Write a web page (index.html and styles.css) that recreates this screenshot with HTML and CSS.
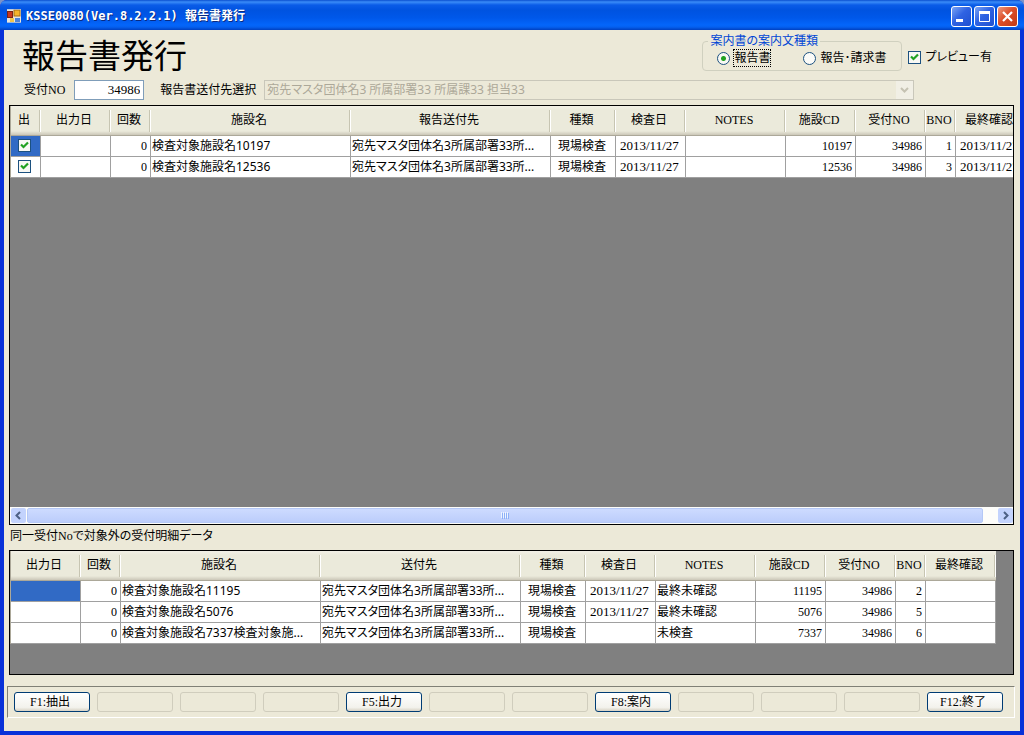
FILE: index.html
```
<!DOCTYPE html>
<html lang="ja">
<head>
<meta charset="utf-8">
<title>KSSE0080(Ver.8.2.2.1) 報告書発行</title>
<link rel="stylesheet" href="styles.css">
</head>
<body>
<div class="window">
  <header class="titlebar">
    <svg class="app-icon" viewBox="0 0 14 14" aria-hidden="true">
      <rect width="14" height="14" fill="#e8e6dc"/>
      <rect x="0.500" y="2.500" width="5" height="6" fill="#c8371c" stroke="#7b2413"/>
      <rect x="7" y="1" width="6" height="6" fill="#f5b52a" stroke="#a66d10"/>
      <rect x="3" y="9" width="4" height="4" fill="#f3c64b"/>
      <rect x="8" y="9" width="5" height="4" fill="#4e83d8"/>
      <path d="M0 0H14M0 13.500H14" stroke="#9cb4dd"/>
    </svg>
    <span class="caption">KSSE0080(Ver.8.2.2.1) 報告書発行</span>
    <div class="controls">
      <button class="ctl" type="button" aria-label="最小化"><svg viewBox="0 0 19 19"><path d="M4 13.500H11" stroke="#fff" stroke-width="3"/></svg></button>
      <button class="ctl" type="button" aria-label="最大化"><svg viewBox="0 0 19 19"><path d="M4.500 5V14.500H14.500V5" fill="none" stroke="#fff"/><path d="M4 5.500H15" stroke="#fff" stroke-width="3"/></svg></button>
      <button class="ctl close" type="button" aria-label="閉じる"><svg viewBox="0 0 19 19"><path d="M5 5L14 14M14 5L5 14" stroke="#fff" stroke-width="2.200"/></svg></button>
    </div>
  </header>
  <main class="client">
    <section class="top">
      <h1>報告書発行</h1>
      <div class="options">
        <fieldset class="group">
          <legend>案内書の案内文種類</legend>
          <label class="opt"><input class="radio" type="radio" name="doc" checked><span class="focus">報告書</span></label>
          <label class="opt"><input class="radio" type="radio" name="doc"><span>報告･請求書</span></label>
        </fieldset>
        <label class="opt preview"><input class="check" type="checkbox" checked><span>プレビュー有</span></label>
      </div>
    </section>
    <section class="filter">
      <label class="filter-label mixed" for="no">受付NO</label>
      <input class="text" id="no" type="text" value="34986">
      <label class="filter-label" for="dest">報告書送付先選択</label>
      <div class="combo">
        <select id="dest" disabled><option>宛先マスタ団体名3 所属部署33 所属課33 担当33</option></select>
        <svg class="arrow" viewBox="0 0 17 17" aria-hidden="true"><path d="M5 6.500L8.500 10L12 6.500" fill="none" stroke="#c5c2b2" stroke-width="2"/></svg>
      </div>
    </section>

    <section class="grid main-grid">
      <div class="rows">
        <table>
          <colgroup><col class="w30"><col class="w70"><col class="w40"><col class="w200"><col class="w200"><col class="w65"><col class="w70"><col class="w100"><col class="w70"><col class="w70"><col class="w30"><col class="w70"></colgroup>
          <thead><tr><th>出</th><th>出力日</th><th>回数</th><th>施設名</th><th>報告送付先</th><th>種類</th><th>検査日</th><th>NOTES</th><th>施設CD</th><th>受付NO</th><th>BNO</th><th>最終確認</th></tr></thead>
          <tbody>
            <tr><td class="mid sel"><input class="check" type="checkbox" aria-label="出力 10197" checked></td><td></td><td class="num">0</td><td>検査対象施設名10197</td><td>宛先マスタ団体名3所属部署33所...</td><td class="mid">現場検査</td><td class="date">2013/11/27</td><td></td><td class="num">10197</td><td class="num">34986</td><td class="num">1</td><td class="date">2013/11/27</td></tr>
            <tr><td class="mid"><input class="check" type="checkbox" aria-label="出力 12536" checked></td><td></td><td class="num">0</td><td>検査対象施設名12536</td><td>宛先マスタ団体名3所属部署33所...</td><td class="mid">現場検査</td><td class="date">2013/11/27</td><td></td><td class="num">12536</td><td class="num">34986</td><td class="num">3</td><td class="date">2013/11/27</td></tr>
          </tbody>
        </table>
      </div>
      <div class="scroll">
        <button class="step" type="button" aria-label="左へ"><svg viewBox="0 0 15 15"><path d="M9 4L5.500 7.500L9 11" fill="none" stroke="#4d6185" stroke-width="2"/></svg></button>
        <div class="track"><div class="thumb"><svg class="grip" viewBox="0 0 9 7"><path d="M0.500 0V6M2.500 0V6M4.500 0V6M6.500 0V6" stroke="#eef4fe"/><path d="M1.500 1V7M3.500 1V7M5.500 1V7M7.500 1V7" stroke="#8cb0f8"/></svg></div></div>
        <button class="step" type="button" aria-label="右へ"><svg viewBox="0 0 15 15"><path d="M6 4L9.500 7.500L6 11" fill="none" stroke="#4d6185" stroke-width="2"/></svg></button>
      </div>
    </section>

    <h2 class="mixed">同一受付Noで対象外の受付明細データ</h2>

    <section class="grid sub-grid">
      <div class="rows">
        <table>
          <colgroup><col class="w70"><col class="w40"><col class="w200"><col class="w200"><col class="w65"><col class="w70"><col class="w100"><col class="w70"><col class="w70"><col class="w30"><col class="w70"></colgroup>
          <thead><tr><th>出力日</th><th>回数</th><th>施設名</th><th>送付先</th><th>種類</th><th>検査日</th><th>NOTES</th><th>施設CD</th><th>受付NO</th><th>BNO</th><th>最終確認</th></tr></thead>
          <tbody>
            <tr><td class="sel"></td><td class="num">0</td><td>検査対象施設名11195</td><td>宛先マスタ団体名3所属部署33所...</td><td class="mid">現場検査</td><td class="date">2013/11/27</td><td>最終未確認</td><td class="num">11195</td><td class="num">34986</td><td class="num">2</td><td></td></tr>
            <tr><td></td><td class="num">0</td><td>検査対象施設名5076</td><td>宛先マスタ団体名3所属部署33所...</td><td class="mid">現場検査</td><td class="date">2013/11/27</td><td>最終未確認</td><td class="num">5076</td><td class="num">34986</td><td class="num">5</td><td></td></tr>
            <tr><td></td><td class="num">0</td><td>検査対象施設名7337検査対象施...</td><td>宛先マスタ団体名3所属部署33所...</td><td class="mid">現場検査</td><td></td><td>未検査</td><td class="num">7337</td><td class="num">34986</td><td class="num">6</td><td></td></tr>
          </tbody>
        </table>
      </div>
    </section>

    <footer class="keys">
      <button class="key" type="button">F1:抽出</button>
      <button class="key" type="button" disabled></button>
      <button class="key" type="button" disabled></button>
      <button class="key" type="button" disabled></button>
      <button class="key" type="button">F5:出力</button>
      <button class="key" type="button" disabled></button>
      <button class="key" type="button" disabled></button>
      <button class="key" type="button">F8:案内</button>
      <button class="key" type="button" disabled></button>
      <button class="key" type="button" disabled></button>
      <button class="key" type="button" disabled></button>
      <button class="key" type="button">F12:終了</button>
    </footer>
  </main>
</div>
</body>
</html>
```
FILE: styles.css
```
* { box-sizing: border-box; }
body {
  margin: 0;
  background: #7b93c8;
  color: #000;
  font: 12px/16px "Noto Sans", "Noto Sans CJK JP", sans-serif;
  font-feature-settings: "palt";
}
button, input, select { font: inherit; color: inherit; margin: 0; padding: 0; }
svg { display: block; }
.mixed, th, .num, .date, .text, .key { font-family: "Liberation Serif", "Noto Sans CJK JP", serif; }

.window {
  display: flex;
  flex-direction: column;
  min-height: 100vh;
  background: #0831d9;
  border-radius: 7px 7px 0 0;
  overflow: hidden;
}
.titlebar {
  display: flex;
  align-items: center;
  height: 30px;
  padding: 2px 6px 0 7px;
  background: linear-gradient(#0a4fd0 0, #3a8cf8 2px, #0a5ce8 5px, #0053e0 10px, #0058ea 18px, #0466fb 25px, #0560f0 27px, #0040c0 30px);
}
.app-icon { width: 14px; height: 14px; margin-right: 5px; }
.caption {
  flex: 1;
  color: #fff;
  font-family: "DejaVu Sans Mono", "Noto Sans CJK JP", monospace;
  font-weight: bold;
  text-shadow: 1px 1px #0a2a80;
  white-space: nowrap;
}
.controls { display: flex; gap: 2px; }
.ctl {
  width: 21px;
  height: 21px;
  border: 1px solid #fff;
  border-radius: 3px;
  background: linear-gradient(135deg, #7ba4f4, #2f63e3 45%, #1f50d0);
}
.ctl.close { background: linear-gradient(135deg, #ee9a80, #dc4e28 45%, #c03a14); }

.client {
  flex: 1;
  display: flex;
  flex-direction: column;
  margin: 0 4px 4px;
  padding: 5px 6px 13px 5px;
  background: #ece9d8;
}
.top { display: flex; justify-content: space-between; height: 40px; padding: 0 22px 0 13px; }
h1 { margin: 0; font-size: 33px; line-height: 42px; font-weight: normal; font-feature-settings: normal; white-space: nowrap; }
.options { display: flex; align-items: flex-start; gap: 6px; }
.group {
  position: relative;
  display: flex;
  gap: 33px;
  width: 200px;
  height: 30px;
  margin: 6px 0 0;
  padding: 8px 0 0 14px;
  border: 1px solid #d0d0bf;
  border-radius: 4px;
}
legend {
  position: absolute;
  left: 5px;
  top: -9px;
  padding: 0 2px;
  background: #ece9d8;
  color: #0046d5;
  white-space: nowrap;
}
.opt { display: flex; align-items: center; height: 16px; gap: 4px; white-space: nowrap; }
.focus { outline: 1px dotted #000; }
.preview { margin-top: 14px; }
.radio, .check { appearance: none; flex: none; width: 13px; height: 13px; border: 1px solid #1c5180; background: #fbfbf8; }
.radio { border-radius: 50%; }
.radio:checked { background: radial-gradient(circle, #21a121 0 2px, #f8f8f4 3px); }
.check:checked {
  background: #f8f8f4 url("data:image/svg+xml,%3Csvg xmlns='http://www.w3.org/2000/svg' viewBox='0 0 11 11'%3E%3Cpath d='M2 4.500L4.500 7L9 2.500' fill='none' stroke='%2321a121' stroke-width='2.200'/%3E%3C/svg%3E") center / 11px 11px no-repeat;
}

.filter { display: flex; align-items: center; height: 20px; margin: 5px 0; padding: 0 100px 0 15px; }
.filter-label { white-space: nowrap; }
.text { width: 70px; height: 20px; margin: 0 16px 0 9px; padding: 0 3px; border: 1px solid #7f9db9; background: #fff; font-size: 13px; text-align: right; }
.combo { position: relative; flex: 1; margin-left: 8px; }
select {
  appearance: none;
  display: block;
  width: 100%;
  height: 20px;
  padding: 0 20px 0 2px;
  border: 1px solid #c9c7ba;
  border-radius: 0;
  background: #ece9d8;
  color: #aca899;
  opacity: 1;
}
.arrow { position: absolute; right: 1px; top: 1px; width: 17px; height: 18px; background: #f1efe5; }

.grid { display: flex; flex-direction: column; border: 1px solid #000; background: #808080; }
.main-grid { flex: 1; }
.rows { flex: 1; overflow: hidden; width: 100%; contain: inline-size; }
table { table-layout: fixed; border-collapse: separate; border-spacing: 0; border-left: 1px solid #aca899; }
.main-grid table { width: 1016px; }
.sub-grid table { width: 986px; }
.w30 { width: 30px; }
.w40 { width: 40px; }
.w65 { width: 65px; }
.w70 { width: 70px; }
.w100 { width: 100px; }
.w200 { width: 200px; }
th, td { overflow: hidden; white-space: nowrap; }
th {
  height: 30px;
  padding: 0 4px 2px 0;
  background:
    linear-gradient(#c7c5b2, #c7c5b2) right 1px center / 1px 22px no-repeat,
    linear-gradient(#fff, #fff) right center / 1px 22px no-repeat,
    linear-gradient(#f2f0e6 0, #ebeadb 4px, #ebeadb 25px, #cbc7b8 29px);
  border-bottom: 1px solid #aca899;
  font-weight: normal;
}
td { height: 21px; padding: 0 2px 1px 1px; border-right: 1px solid #a0a0a0; border-bottom: 1px solid #a0a0a0; background: #fff; }
.num { text-align: right; padding-right: 3px; }
.mid { text-align: center; padding-right: 3px; }
.mid .check { display: block; margin: 0 auto; }
.date { font-size: 13px; padding-left: 4px; }
td.sel { background: #316ac5; }

.scroll { display: flex; gap: 1px; height: 17px; padding: 1px 0 1px 1px; background: #fdfdfa; }
.step { width: 15px; height: 15px; border: 0; border-radius: 2px; background: #c3d3fd; }
.track { flex: 1; padding-right: 14px; }
.thumb { display: flex; align-items: center; justify-content: center; height: 15px; border: 1px solid #b4c8f6; border-radius: 2px; background: linear-gradient(#cddbff, #bccdfb); }
.grip { width: 9px; height: 7px; }

h2 { margin: 0; padding: 3px 1px 6px; font-size: 12px; line-height: 16px; font-weight: normal; }
.sub-grid { min-height: 125px; }

.keys {
  display: grid;
  grid-template-columns: repeat(12, 1fr);
  gap: 7px;
  margin: 11px -1px 0 -2px;
  padding: 5px 11px 5px 6px;
  border: 1px solid;
  border-color: #808076 #fff #fff #808076;
}
.key {
  height: 20px;
  padding-right: 4px;
  border: 1px solid #003c74;
  border-radius: 3px;
  background: linear-gradient(#fff, #f3f2ec 80%, #d8d2c4);
  white-space: nowrap;
}
.key:disabled { border-color: #d0cdbd; background: #ece9d8; }
```
